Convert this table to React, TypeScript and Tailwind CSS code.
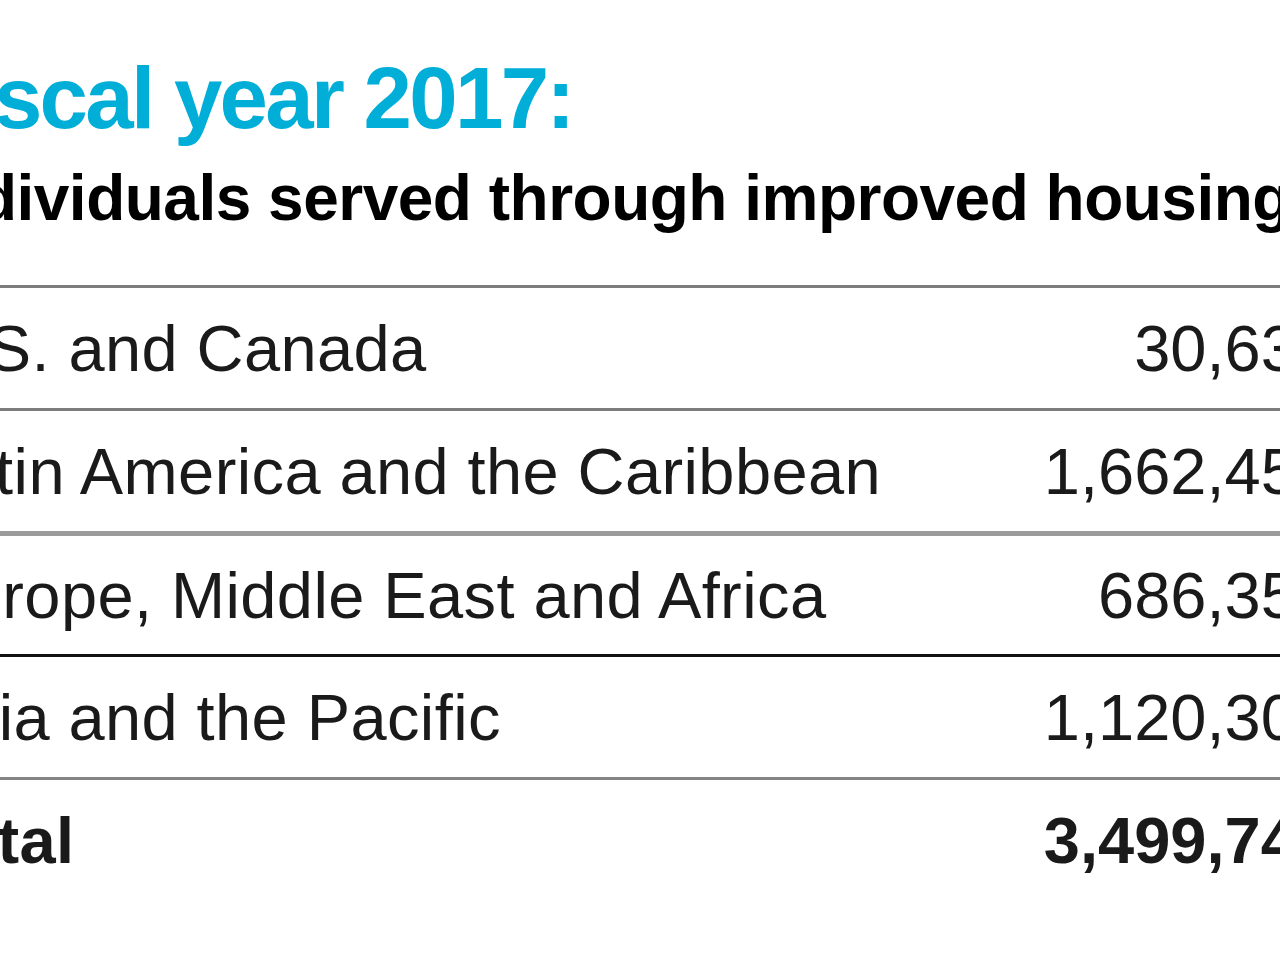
import React from "react";

type Row = {
  label: string;
  value: string;
  line: string;
  total?: boolean;
};

const rows: Row[] = [
  { label: "U.S. and Canada", value: "30,632", line: "border-t-[3px] border-[#7c7c7c]" },
  { label: "Latin America and the Caribbean", value: "1,662,453", line: "border-t-[3px] border-[#7c7c7c]" },
  { label: "Europe, Middle East and Africa", value: "686,357", line: "border-t-[5px] border-[#9b9b9b]" },
  { label: "Asia and the Pacific", value: "1,120,302", line: "border-t-[3px] border-[#111111]" },
  { label: "Total", value: "3,499,744", line: "border-t-[3px] border-[#858585]", total: true },
];

export default function App() {
  return (
    <div className="h-[960px] w-[1280px] overflow-hidden bg-white font-['Liberation_Sans',Arial,sans-serif]">
      <div className="-ml-[78px] w-[1411px] pt-[54px]">
        <h1 className="whitespace-nowrap text-[87px] font-bold leading-none tracking-[-2.7px] text-[#00aed8]">
          Fiscal year 2017:
        </h1>
        <h2 className="mt-[25px] whitespace-nowrap text-[64px] font-bold leading-none tracking-[-0.5px] text-black">
          Individuals served through improved housing
        </h2>

        <div className="mt-[55px]">
          {rows.map((r) => (
            <div
              key={r.label}
              className={`flex h-[123px] items-center justify-between ${r.line}`}
            >
              <span
                className={`whitespace-nowrap text-[65px] leading-none tracking-[0.4px] text-[#1a1a1a] ${
                  r.total ? "font-bold" : ""
                }`}
              >
                {r.label}
              </span>
              <span
                className={`whitespace-nowrap text-[65px] leading-none text-[#1a1a1a] ${
                  r.total ? "font-bold" : ""
                }`}
              >
                {r.value}
              </span>
            </div>
          ))}
        </div>
      </div>
    </div>
  );
}
